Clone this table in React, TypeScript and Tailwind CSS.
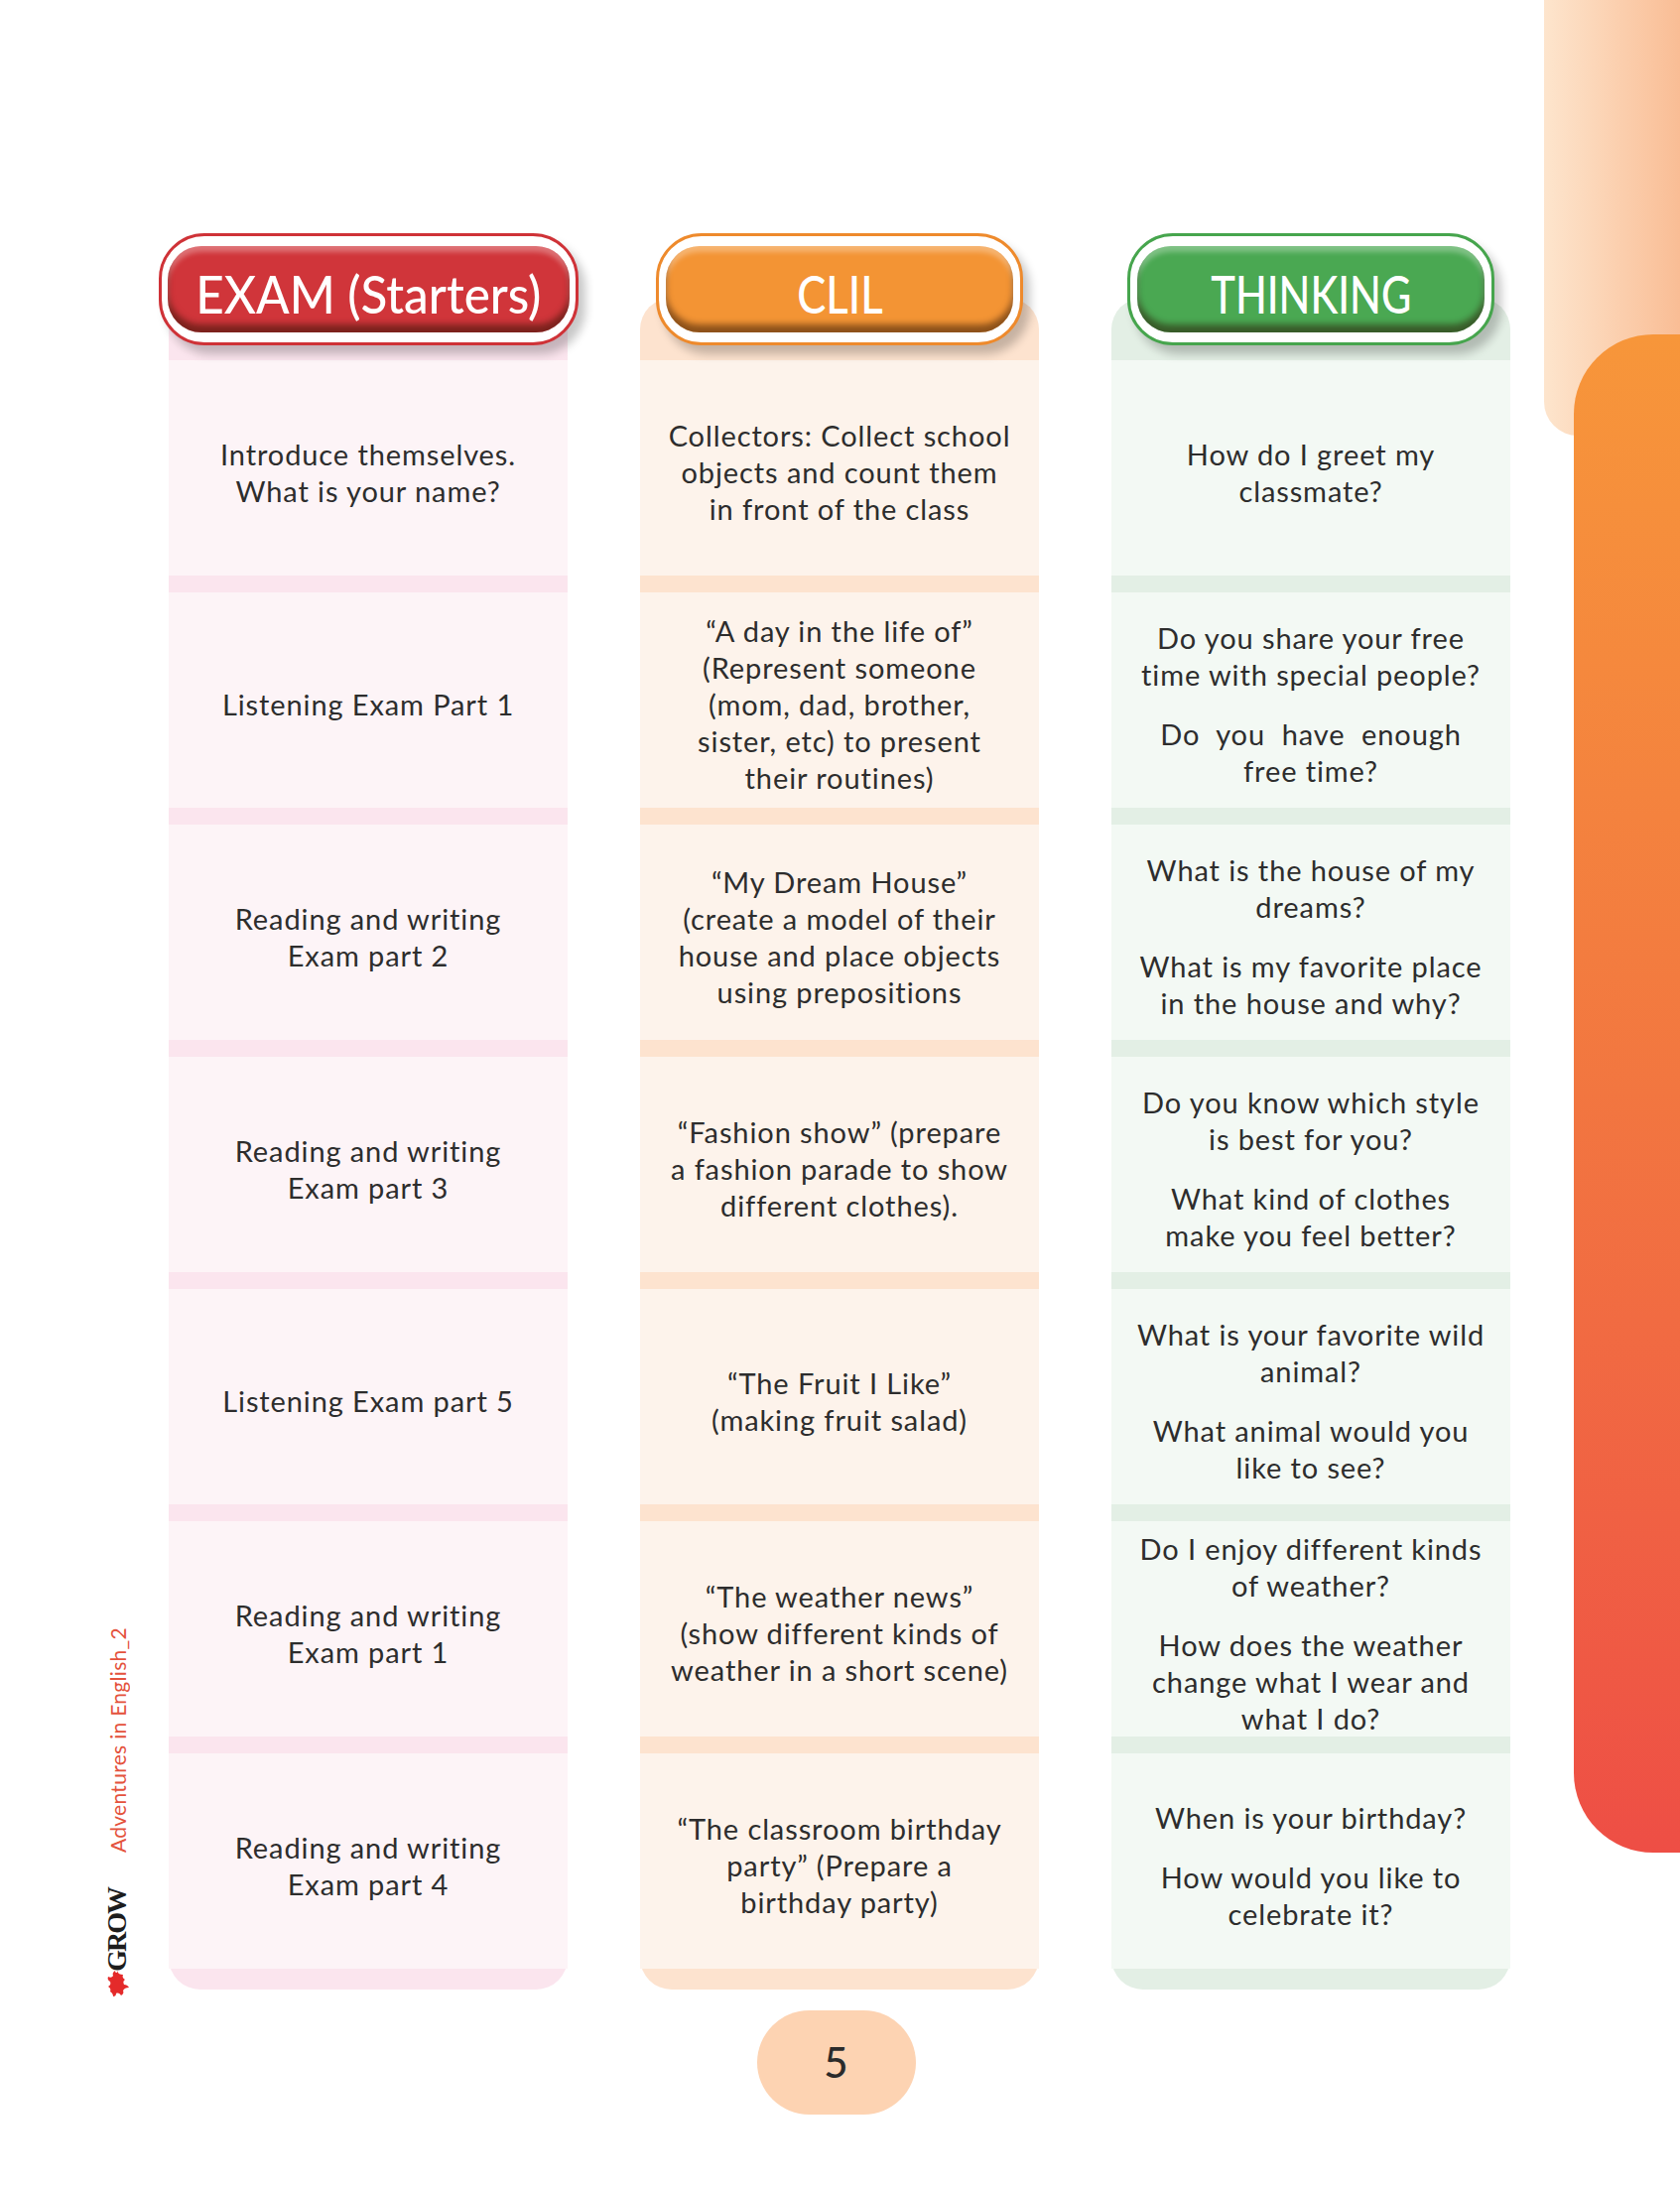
import React from 'react';

type Column = {
  title: string;
  titleScale: string;
  headerWidth: string;
  ring: string;
  fill: string;
  band: string;
  row: string;
  rows: string[][];
};

// 各列の内容 (改行は原本どおり)
const COLUMNS: Column[] = [
  {
    title: 'EXAM (Starters)',
    titleScale: 'scale-x-[0.95]',
    headerWidth: 'w-[423px] px-[6px]',
    ring: 'border-[#cf3237]',
    fill: 'bg-[#d0353a]',
    band: 'bg-[#fbe5ee]',
    row: 'bg-[#fdf4f7]',
    rows: [
      ['Introduce themselves.\nWhat is your name?'],
      ['Listening Exam Part 1'],
      ['Reading and writing\nExam part 2'],
      ['Reading and writing\nExam part 3'],
      ['Listening Exam part 5'],
      ['Reading and writing\nExam part 1'],
      ['Reading and writing\nExam part 4'],
    ],
  },
  {
    title: 'CLIL',
    titleScale: 'scale-x-[0.84]',
    headerWidth: 'w-[370px] px-[7px]',
    ring: 'border-[#ee8a2c]',
    fill: 'bg-[#f39434]',
    band: 'bg-[#fde3cf]',
    row: 'bg-[#fdf3eb]',
    rows: [
      ['Collectors: Collect school\nobjects and count them\nin front of the class'],
      ['“A day in the life of”\n(Represent someone\n(mom, dad, brother,\nsister, etc) to present\ntheir routines)'],
      ['“My Dream House”\n(create a model of their\nhouse and place objects\nusing prepositions'],
      ['“Fashion show” (prepare\na fashion parade to show\ndifferent clothes).'],
      ['“The Fruit I Like”\n(making fruit salad)'],
      ['“The weather news”\n(show different kinds of\nweather in a short scene)'],
      ['“The classroom birthday\nparty” (Prepare a\nbirthday party)'],
    ],
  },
  {
    title: 'THINKING',
    titleScale: 'scale-x-[0.8]',
    headerWidth: 'w-[370px] px-[7px]',
    ring: 'border-[#46a54d]',
    fill: 'bg-[#4aa852]',
    band: 'bg-[#e3efe5]',
    row: 'bg-[#f3f9f4]',
    rows: [
      ['How do I greet my\nclassmate?'],
      ['Do you share your free\ntime with special people?', 'Do  you  have  enough\nfree time?'],
      ['What is the house of my\ndreams?', 'What is my favorite place\nin the house and why?'],
      ['Do you know which style\nis best for you?', 'What kind of clothes\nmake you feel better?'],
      ['What is your favorite wild\nanimal?', 'What animal would you\nlike to see?'],
      ['Do I enjoy different kinds\nof weather?', 'How does the weather\nchange what I wear and\nwhat I do?'],
      ['When is your birthday?', 'How would you like to\ncelebrate it?'],
    ],
  },
];

function HeaderPill({ col }: { col: Column }) {
  return (
    <div
      className={`relative z-10 -mb-[48px] h-[113px] ${col.headerWidth} py-[10px] rounded-[46px] border-[3px] ${col.ring} bg-white shadow-[7px_9px_10px_rgba(0,0,0,0.22)]`}
    >
      <div
        className={`flex h-full items-center justify-center rounded-[34px] ${col.fill} shadow-[inset_0_-8px_6px_rgba(40,15,0,0.5),inset_0_6px_5px_rgba(255,255,255,0.3)]`}
      >
        <span
          className={`inline-block pt-[8px] text-[52px] leading-none text-white font-['Lato',sans-serif] font-medium ${col.titleScale}`}
        >
          {col.title}
        </span>
      </div>
    </div>
  );
}

function ColumnCard({ col }: { col: Column }) {
  return (
    <div className="flex w-[402px] flex-col items-center">
      <HeaderPill col={col} />
      <div className={`flex w-full flex-col gap-[17px] rounded-[32px] ${col.band} pt-[63px] pb-[21px]`}>
        {col.rows.map((paras, i) => (
          <div
            key={i}
            className={`flex h-[217px] flex-col items-center justify-center gap-[23px] px-2 pt-[8px] ${col.row}`}
          >
            {paras.map((p, j) => (
              <p
                key={j}
                className="whitespace-pre text-center text-[29px] leading-[37px] tracking-[0.9px] text-[#2d2d2d] font-['Lato',sans-serif]"
              >
                {p}
              </p>
            ))}
          </div>
        ))}
      </div>
    </div>
  );
}

export default function App() {
  return (
    <div className="relative h-[2205px] w-[1693px] overflow-hidden bg-white">
      {/* 右側の装飾 */}
      <div className="absolute right-0 top-0 h-[439px] w-[137px] rounded-bl-[34px] bg-gradient-to-r from-[#fde5cd] to-[#f9bd95]" />
      <div className="absolute right-0 top-[337px] h-[1530px] w-[107px] rounded-l-[80px] bg-gradient-to-b from-[#f7963a] via-[#f27640] to-[#ee4e45]" />

      {/* 左側の縦書き */}
      <div className="absolute left-[104px] top-[1640px] flex flex-col items-center gap-[36px]">
        <span className="rotate-180 text-[21px] leading-none tracking-[0.3px] text-[#e4523c] [writing-mode:vertical-rl] font-['Lato',sans-serif]">
          Adventures in English_2
        </span>
        <div className="flex flex-col items-center">
          <span className="rotate-180 text-[28px] font-bold leading-none tracking-[-2px] text-[#1d1d1d] [writing-mode:vertical-rl] font-['Liberation_Serif',serif]">
            GROW
          </span>
          <svg width="26" height="28" viewBox="0 0 26 28" className="-mt-[2px]">
            <path
              d="M13 1c1 3 3 4 6 4-1 2 0 4 2 5-2 1-2 3-1 5 2 0 4 1 5 3-3 0-5 1-6 3 1 2 0 4-2 5-1-2-3-3-5-2 0 2-1 3-3 3 0-2-1-4-3-5 1-2 0-4-2-5 2-1 3-3 2-5-2-1-3-3-2-5 2 1 4 1 5-1-1-2 0-4 2-5 0 2 2 3 2 1z"
              fill="#e42a2a"
            />
          </svg>
        </div>
      </div>

      <div className="flex flex-col">
        <div className="flex gap-[73px] pl-[170px] pt-[235px]">
          {COLUMNS.map((col) => (
            <ColumnCard key={col.title} col={col} />
          ))}
        </div>
        <div className="flex justify-center pr-[8px] pt-[21px]">
          <div className="flex h-[105px] w-[160px] items-center justify-center rounded-full bg-[#fdd3b2]">
            <span className="text-[42px] font-medium text-[#2b2b2b] font-['Lato',sans-serif]">5</span>
          </div>
        </div>
      </div>
    </div>
  );
}
